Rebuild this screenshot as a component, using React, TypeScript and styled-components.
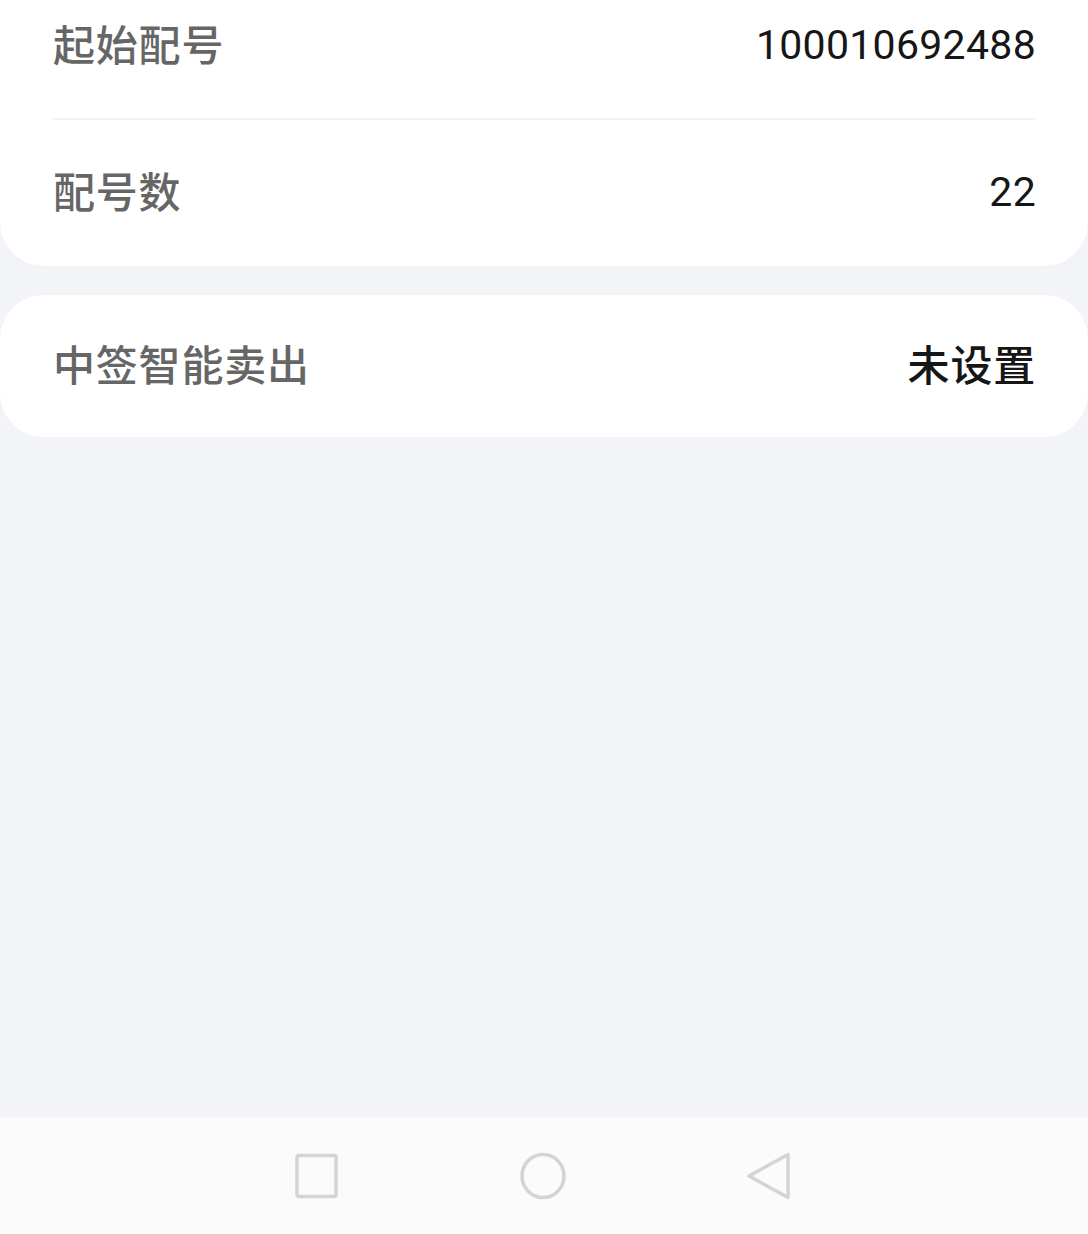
import styled, { createGlobalStyle } from 'styled-components';

const GlobalStyle = createGlobalStyle`
  html, body {
    margin: 0;
    padding: 0;
    background: #f3f4f8;
  }
  body {
    font-family: Roboto, "Noto Sans CJK SC", sans-serif;
  }
`;

const Screen = styled.div`
  width: 1088px;
  height: 1234px;
  display: flex;
  flex-direction: column;
  overflow: hidden;
  background: #f3f4f8;
`;

const Content = styled.main`
  flex: 1;
  display: flex;
  flex-direction: column;
  gap: 29px;
`;

// first card is scrolled partly off the top of the screen
const Card = styled.section<{ $clipped?: boolean }>`
  background: #ffffff;
  border-radius: ${(p) => (p.$clipped ? '0 0 44px 44px' : '44px')};
  margin-top: ${(p) => (p.$clipped ? '-27px' : '0')};
  padding: 0 52px 0 53px;
`;

const Row = styled.div<{ $height: number; $divider?: boolean }>`
  height: ${(p) => p.$height}px;
  display: flex;
  align-items: center;
  justify-content: space-between;
  box-sizing: border-box;
  border-bottom: ${(p) => (p.$divider ? '2px solid #f3f3f5' : 'none')};
`;

const Label = styled.span`
  font-family: "Noto Sans CJK SC", sans-serif;
  font-size: 42px;
  font-weight: 500;
  color: #666666;
  letter-spacing: 0.8px;
  padding-bottom: 7px;
`;

const Value = styled.span<{ $cjk?: boolean }>`
  font-family: ${(p) => (p.$cjk ? '"Noto Sans CJK SC", sans-serif' : 'Roboto, sans-serif')};
  font-size: ${(p) => (p.$cjk ? 42 : 41)}px;
  font-weight: ${(p) => (p.$cjk ? 500 : 400)};
  color: #161616;
  letter-spacing: ${(p) => (p.$cjk ? '0.8px' : '0.3px')};
  padding-bottom: ${(p) => (p.$cjk ? 7 : 2)}px;
`;

const NavBar = styled.nav`
  height: 117px;
  background: #fbfbfb;
  display: flex;
  align-items: center;
  justify-content: center;
  gap: 178px;
  padding-right: 2px;
`;

const NavIcon = styled.svg`
  width: 48px;
  height: 48px;
  display: block;
`;

export default function App() {
  return (
    <>
      <GlobalStyle />
      <Screen>
        <Content>
          <Card $clipped>
            <Row $height={147} $divider>
              <Label>起始配号</Label>
              <Value>100010692488</Value>
            </Row>
            <Row $height={146}>
              <Label>配号数</Label>
              <Value>22</Value>
            </Row>
          </Card>
          <Card>
            <Row $height={142}>
              <Label>中签智能卖出</Label>
              <Value $cjk>未设置</Value>
            </Row>
          </Card>
        </Content>
        <NavBar>
          <NavIcon viewBox="0 0 48 48">
            <rect x="4" y="3.5" width="39" height="41" rx="2" fill="none" stroke="#d4d4d4" strokeWidth="3.5" />
          </NavIcon>
          <NavIcon viewBox="0 0 48 48">
            <ellipse cx="24" cy="24" rx="21" ry="21.5" fill="none" stroke="#d4d4d4" strokeWidth="3.5" />
          </NavIcon>
          <NavIcon viewBox="0 0 48 48">
            <path d="M43 2.5 L43 45.5 L4 24 Z" fill="none" stroke="#d4d4d4" strokeWidth="3.5" strokeLinejoin="round" />
          </NavIcon>
        </NavBar>
      </Screen>
    </>
  );
}
